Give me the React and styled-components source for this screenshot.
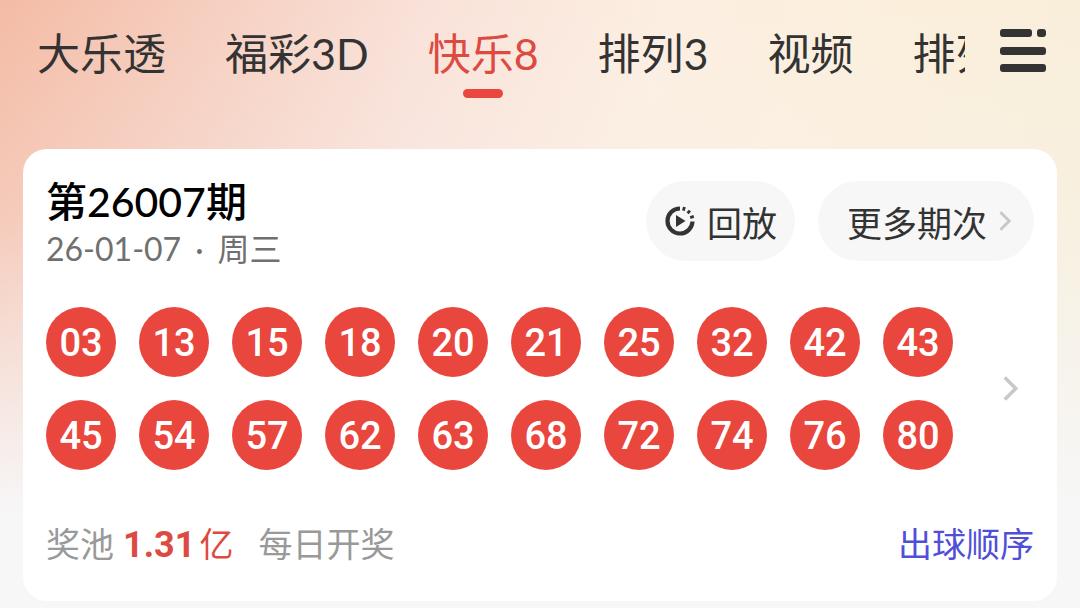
import styled, { createGlobalStyle } from "styled-components";

const GlobalStyle = createGlobalStyle`
  * {
    box-sizing: border-box;
  }

  body {
    margin: 0;
    background-color: #f7f7f8;
    font-family: Lato, "Noto Sans CJK SC", sans-serif;
  }

  button {
    border: none;
    padding: 0;
    background: none;
    font-family: inherit;
    color: inherit;
    cursor: pointer;
  }
`;

const Page = styled.div`
  min-height: 100vh;
  padding-bottom: 8px;
  background:
    linear-gradient(to bottom, rgba(247, 247, 248, 0) 0%, rgba(247, 247, 248, 0.2) 35%, #f7f7f8 85%),
    linear-gradient(100deg, #f4bba5 0%, #f6cfc0 18%, #f9e2d9 36%, #fceee1 56%, #fbefdc 76%, #f7eed9 100%);
`;

const TopBar = styled.header`
  display: flex;
  align-items: flex-start;
  height: 149px;
  padding-right: 32px;
`;

const Tabs = styled.nav`
  display: flex;
  flex: 1;
  min-width: 0;
  gap: 59px;
  margin-right: 34px;
  padding-left: 37px;
  overflow: hidden;
`;

const Tab = styled.a`
  display: flex;
  flex-direction: column;
  align-items: center;
  flex-shrink: 0;
  padding-top: 24px;
  font-size: 43px;
  line-height: 60px;
  color: ${({ $active }) => ($active ? "#dd4a42" : "#333333")};
  text-decoration: none;
  white-space: nowrap;

  &::after {
    content: "";
    width: 40px;
    height: 9px;
    margin-top: 5px;
    border-radius: 5px;
    background-color: ${({ $active }) => ($active ? "#e8463e" : "transparent")};
  }
`;

const MenuButton = styled.button`
  width: 49px;
  height: 44px;
  margin-top: 29px;

  svg {
    display: block;
  }
`;

const Card = styled.main`
  margin: 0 23px;
  padding: 32px 23px;
  border-radius: 24px;
  background-color: #ffffff;
`;

const CardHeader = styled.div`
  display: flex;
  justify-content: space-between;
`;

const Issue = styled.h1`
  margin: 0;
  font-size: 41px;
  font-weight: 500;
  line-height: 42px;
  color: #000000;
`;

const DrawDate = styled.p`
  display: flex;
  gap: 14px;
  margin: 4px 0 0;
  font-size: 32px;
  line-height: 44px;
  color: #707070;
`;

const Actions = styled.div`
  display: flex;
  gap: 23px;
`;

const Pill = styled.button`
  display: flex;
  align-items: center;
  gap: 12px;
  height: 80px;
  padding: 0 ${({ $wide }) => ($wide ? "23px 0 29px" : "18px 0 19px")};
  border-radius: 40px;
  background-color: #f7f7f7;
  font-size: 35px;
  color: #333333;
`;

const Results = styled.div`
  display: flex;
  align-items: center;
  justify-content: space-between;
  margin-top: 36px;
  padding-right: 16px;
`;

const Balls = styled.ul`
  display: grid;
  grid-template-columns: repeat(10, 70px);
  gap: 23px;
  margin: 0;
  padding: 0;
  list-style: none;
`;

const Ball = styled.li`
  display: flex;
  align-items: center;
  justify-content: center;
  height: 70px;
  padding-top: 2px;
  border-radius: 50%;
  background-color: #e9463e;
  font-family: Roboto, sans-serif;
  font-size: 38px;
  font-weight: 500;
  color: #ffffff;
`;

const CardFooter = styled.div`
  display: flex;
  justify-content: space-between;
  margin-top: 50px;
  font-size: 34px;
  line-height: 48px;
  color: #999999;
`;

const Pool = styled.div`
  display: flex;
  align-items: baseline;
`;

const Amount = styled.strong`
  margin: 0 25px 0 9px;
  font-weight: 400;
  color: #dd4a42;
`;

const Figure = styled.span`
  margin-right: 4px;
  font-family: Roboto, sans-serif;
  font-size: 36px;
  font-weight: 700;
`;

const OrderLink = styled.a`
  color: #4f4fd8;
  text-decoration: none;
`;

const tabs = ["大乐透", "福彩3D", "快乐8", "排列3", "视频", "排列5"];

const numbers = [
  "03", "13", "15", "18", "20", "21", "25", "32", "42", "43",
  "45", "54", "57", "62", "63", "68", "72", "74", "76", "80",
];

const MenuIcon = () => (
  <svg width="49" height="44" viewBox="0 0 49 44" fill="#333333" aria-hidden="true">
    <rect x="1" y="0" width="32" height="8" rx="3" />
    <rect x="38" y="0" width="9" height="8" rx="3" />
    <rect x="1" y="18" width="46" height="8" rx="3" />
    <rect x="1" y="35" width="46" height="8" rx="3" />
  </svg>
);

const ReplayIcon = () => (
  <svg width="30" height="30" viewBox="0 0 30 30" fill="none" aria-hidden="true">
    <path d="M15 2.5A12.5 12.5 0 1 0 27.5 15.5" stroke="#333333" strokeWidth="4.2" />
    <path d="M19.4 1L18.4 4.6M24.9 4.6L22.6 7.2M28.8 10.4L25.2 11.6" stroke="#333333" strokeWidth="2.8" />
    <path d="M11 9L20.5 15L11 21Z" fill="#333333" />
  </svg>
);

const Chevron = ({ width, height }) => (
  <svg width={width} height={height} viewBox="0 0 14 24" fill="none" aria-hidden="true">
    <path d="M1.5 1.5L12 12L1.5 22.5" stroke="#c8c8c8" strokeWidth="3.4" />
  </svg>
);

export default function App() {
  return (
    <>
      <GlobalStyle />
      <Page>
        <TopBar>
          <Tabs>
            {tabs.map((tab) => (
              <Tab key={tab} href="#" $active={tab === "快乐8"}>
                {tab}
              </Tab>
            ))}
          </Tabs>
          <MenuButton aria-label="菜单">
            <MenuIcon />
          </MenuButton>
        </TopBar>
        <Card>
          <CardHeader>
            <div>
              <Issue>第26007期</Issue>
              <DrawDate>
                <span>26-01-07</span>
                <span>·</span>
                <span>周三</span>
              </DrawDate>
            </div>
            <Actions>
              <Pill>
                <ReplayIcon />
                回放
              </Pill>
              <Pill $wide>
                更多期次
                <Chevron width={12} height={20} />
              </Pill>
            </Actions>
          </CardHeader>
          <Results>
            <Balls>
              {numbers.map((number) => (
                <Ball key={number}>{number}</Ball>
              ))}
            </Balls>
            <Chevron width={15} height={25} />
          </Results>
          <CardFooter>
            <Pool>
              奖池
              <Amount>
                <Figure>1.31</Figure>亿
              </Amount>
              每日开奖
            </Pool>
            <OrderLink href="#">出球顺序</OrderLink>
          </CardFooter>
        </Card>
      </Page>
    </>
  );
}
